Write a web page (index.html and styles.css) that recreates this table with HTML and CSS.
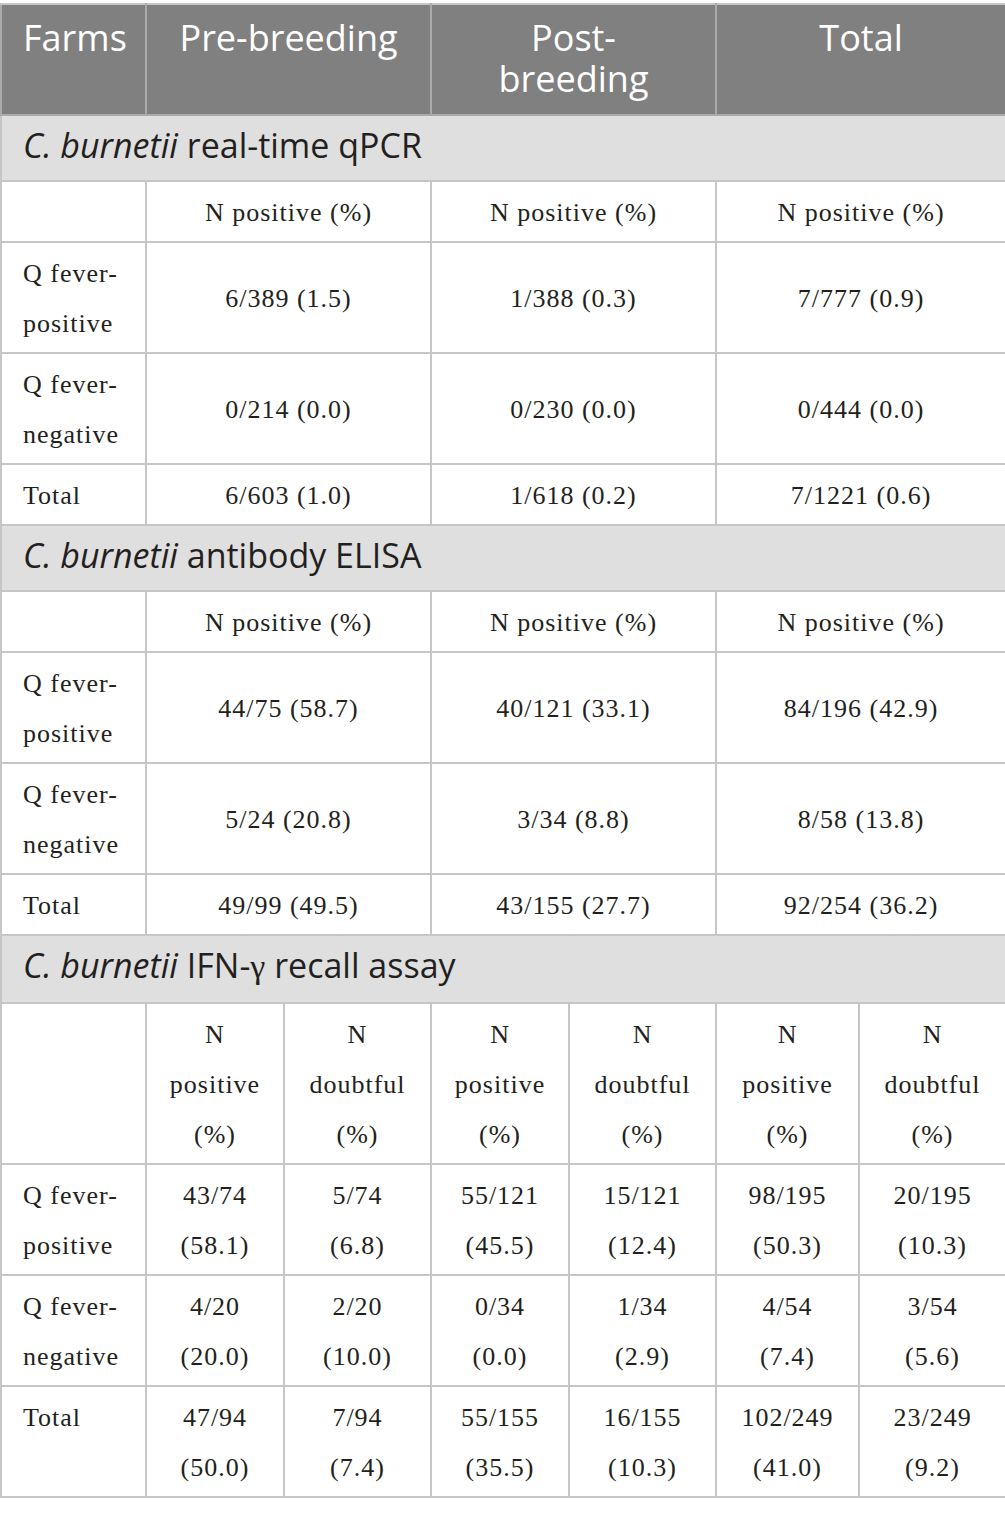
FILE: index.html
```html
<!DOCTYPE html>
<html lang="en">
<head>
<meta charset="utf-8">
<title>C. burnetii results</title>
<link rel="stylesheet" href="styles.css">
</head>
<body>
<table class="data">
  <colgroup>
    <col class="c-label">
    <col class="c-a">
    <col class="c-b">
    <col class="c-a">
    <col class="c-b">
    <col class="c-c">
    <col class="c-b">
  </colgroup>
  <thead>
    <tr class="head">
      <th class="h-left">Farms</th>
      <th colspan="2">Pre-breeding</th>
      <th colspan="2">Post-<br>breeding</th>
      <th colspan="2">Total</th>
    </tr>
  </thead>
  <tbody>
    <tr class="section"><td colspan="7"><i>C. burnetii</i> real-time qPCR</td></tr>
    <tr>
      <td class="label"></td>
      <td colspan="2">N positive (%)</td>
      <td colspan="2">N positive (%)</td>
      <td colspan="2">N positive (%)</td>
    </tr>
    <tr>
      <td class="label">Q fever-positive</td>
      <td colspan="2">6/389 (1.5)</td>
      <td colspan="2">1/388 (0.3)</td>
      <td colspan="2">7/777 (0.9)</td>
    </tr>
    <tr>
      <td class="label">Q fever-negative</td>
      <td colspan="2">0/214 (0.0)</td>
      <td colspan="2">0/230 (0.0)</td>
      <td colspan="2">0/444 (0.0)</td>
    </tr>
    <tr>
      <td class="label">Total</td>
      <td colspan="2">6/603 (1.0)</td>
      <td colspan="2">1/618 (0.2)</td>
      <td colspan="2">7/1221 (0.6)</td>
    </tr>

    <tr class="section"><td colspan="7"><i>C. burnetii</i> antibody ELISA</td></tr>
    <tr>
      <td class="label"></td>
      <td colspan="2">N positive (%)</td>
      <td colspan="2">N positive (%)</td>
      <td colspan="2">N positive (%)</td>
    </tr>
    <tr>
      <td class="label">Q fever-positive</td>
      <td colspan="2">44/75 (58.7)</td>
      <td colspan="2">40/121 (33.1)</td>
      <td colspan="2">84/196 (42.9)</td>
    </tr>
    <tr>
      <td class="label">Q fever-negative</td>
      <td colspan="2">5/24 (20.8)</td>
      <td colspan="2">3/34 (8.8)</td>
      <td colspan="2">8/58 (13.8)</td>
    </tr>
    <tr>
      <td class="label">Total</td>
      <td colspan="2">49/99 (49.5)</td>
      <td colspan="2">43/155 (27.7)</td>
      <td colspan="2">92/254 (36.2)</td>
    </tr>

    <tr class="section"><td colspan="7"><i>C. burnetii</i> IFN-<span class="greek">γ</span> recall assay</td></tr>
    <tr>
      <td class="label"></td>
      <td>N positive (%)</td>
      <td>N doubtful (%)</td>
      <td>N positive (%)</td>
      <td>N doubtful (%)</td>
      <td>N positive (%)</td>
      <td>N doubtful (%)</td>
    </tr>
    <tr>
      <td class="label">Q fever-positive</td>
      <td>43/74 (58.1)</td>
      <td>5/74 (6.8)</td>
      <td>55/121 (45.5)</td>
      <td>15/121 (12.4)</td>
      <td>98/195 (50.3)</td>
      <td>20/195 (10.3)</td>
    </tr>
    <tr>
      <td class="label">Q fever-negative</td>
      <td>4/20 (20.0)</td>
      <td>2/20 (10.0)</td>
      <td>0/34 (0.0)</td>
      <td>1/34 (2.9)</td>
      <td>4/54 (7.4)</td>
      <td>3/54 (5.6)</td>
    </tr>
    <tr>
      <td class="label">Total</td>
      <td>47/94 (50.0)</td>
      <td>7/94 (7.4)</td>
      <td>55/155 (35.5)</td>
      <td>16/155 (10.3)</td>
      <td>102/249 (41.0)</td>
      <td>23/249 (9.2)</td>
    </tr>
  </tbody>
</table>
</body>
</html>
```

FILE: styles.css
```css
html, body {
  margin: 0;
  padding: 0;
  background: #ffffff;
}

body {
  padding-top: 3px;
}

.data {
  width: 1005px;
  table-layout: fixed;
  border-collapse: collapse;
  font-family: "Liberation Serif", "Times New Roman", serif;
  color: #231f20;
}

.c-label { width: 145px; }
.c-a { width: 138px; }
.c-b { width: 147px; }
.c-c { width: 143px; }

.data th,
.data td {
  border: 2px solid #c6c6c6;
}

.head th {
  background: #7f807f;
  color: #ffffff;
  font-family: "Open Sans", "Noto Sans", sans-serif;
  font-weight: 400;
  font-size: 36px;
  line-height: 41px;
  padding: 12px 10px 15px;
  text-align: center;
  vertical-align: top;
  border-color: #a9aaa9;
  border-top-color: #c6c6c6;
}

.head th.h-left {
  text-align: left;
  padding-left: 21px;
}

.section td {
  background: #e0dfdf;
  font-family: "Open Sans", "Noto Sans", sans-serif;
  font-size: 34px;
  line-height: 46px;
  padding: 6px 21px 12px;
  text-align: left;
  color: #231f20;
}

.section .greek {
  font-family: "Liberation Serif", "Times New Roman", serif;
}

.data tbody tr:not(.section) td {
  font-size: 26px;
  letter-spacing: 1px;
  line-height: 50px;
  padding: 6px 21px 3px;
  text-align: center;
  vertical-align: middle;
}

.data tbody tr:not(.section) td.label {
  text-align: left;
  vertical-align: top;
  padding-left: 21px;
  padding-right: 8px;
}
```
